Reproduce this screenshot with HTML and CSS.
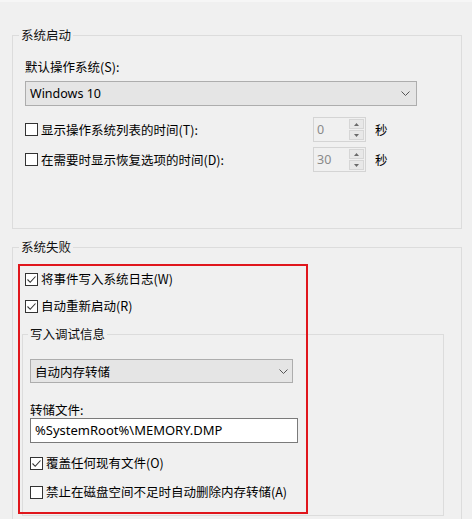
FILE: index.html
```html
<!DOCTYPE html>
<html lang="zh-CN">
<head>
<meta charset="utf-8">
<title>启动和故障恢复</title>
<link rel="stylesheet" href="styles.css">
</head>
<body>
<div class="page">
  <fieldset class="group g1">
    <legend>系统启动</legend>
    <div class="gbody">
      <div class="lbl">默认操作系统(S):</div>
      <div class="select wide">
        <span class="latin">Windows 10</span>
        <svg class="chev" width="9" height="5" viewBox="0 0 9 5"><polyline points="0.5,0.5 4.5,4.5 8.5,0.5" fill="none" stroke="#555" stroke-width="1"/></svg>
      </div>
      <div class="trow r1">
        <label class="cb"><span class="box"></span><span>显示操作系统列表的时间(T):</span></label>
        <div class="spin"><span class="num">0</span><span class="btns"><span class="sb"><svg width="5" height="3" viewBox="0 0 5 3"><polygon points="0,3 2.5,0 5,3" fill="#6a6a6a"/></svg></span><span class="sb"><svg width="5" height="3" viewBox="0 0 5 3"><polygon points="0,0 2.5,3 5,0" fill="#6a6a6a"/></svg></span></span></div>
        <span class="unit">秒</span>
      </div>
      <div class="trow r2">
        <label class="cb"><span class="box"></span><span>在需要时显示恢复选项的时间(D):</span></label>
        <div class="spin"><span class="num">30</span><span class="btns"><span class="sb"><svg width="5" height="3" viewBox="0 0 5 3"><polygon points="0,3 2.5,0 5,3" fill="#6a6a6a"/></svg></span><span class="sb"><svg width="5" height="3" viewBox="0 0 5 3"><polygon points="0,0 2.5,3 5,0" fill="#6a6a6a"/></svg></span></span></div>
        <span class="unit">秒</span>
      </div>
    </div>
  </fieldset>

  <fieldset class="group g2">
    <legend>系统失败</legend>
    <div class="gbody">
      <label class="cb c1"><span class="box"><svg width="11" height="11" viewBox="0 0 11 11"><polyline points="1.5,5.5 4.2,8.3 9.5,2.5" fill="none" stroke="#333" stroke-width="1.1"/></svg></span><span>将事件写入系统日志(W)</span></label>
      <label class="cb c2"><span class="box"><svg width="11" height="11" viewBox="0 0 11 11"><polyline points="1.5,5.5 4.2,8.3 9.5,2.5" fill="none" stroke="#333" stroke-width="1.1"/></svg></span><span>自动重新启动(R)</span></label>
      <fieldset class="group inner">
        <legend>写入调试信息</legend>
        <div class="ibody">
          <div class="select narrow">
            <span>自动内存转储</span>
            <svg class="chev" width="9" height="5" viewBox="0 0 9 5"><polyline points="0.5,0.5 4.5,4.5 8.5,0.5" fill="none" stroke="#555" stroke-width="1"/></svg>
          </div>
          <div class="lbl file">转储文件:</div>
          <div class="textbox latin">%SystemRoot%\MEMORY.DMP</div>
          <label class="cb c3"><span class="box"><svg width="11" height="11" viewBox="0 0 11 11"><polyline points="1.5,5.5 4.2,8.3 9.5,2.5" fill="none" stroke="#333" stroke-width="1.1"/></svg></span><span>覆盖任何现有文件(O)</span></label>
          <label class="cb c4"><span class="box"></span><span>禁止在磁盘空间不足时自动删除内存转储(A)</span></label>
        </div>
      </fieldset>
    </div>
    <div class="highlight"></div>
  </fieldset>
</div>
</body>
</html>
```

FILE: styles.css
```css
html, body {
  margin: 0;
  background: #f0f0f0;
}
body {
  font-family: "Noto Sans CJK SC", "Noto Sans", sans-serif;
  font-size: 12.5px;
  color: #000;
  overflow: hidden;
}
.page {
  border-top: 2px solid #f6f6f6;
  padding: 25px 0 0 12px;
}
.latin {
  font-family: "Noto Sans", "Noto Sans CJK SC", sans-serif;
}
.group {
  margin: 0;
  padding: 0;
  min-width: 0;
  border: 1px solid #dcdcdc;
  box-sizing: border-box;
}
.group > legend {
  padding: 0 2px;
  margin-left: 6px;
  line-height: 16px;
  font-size: 12.5px;
  color: #111;
}
.g1 {
  width: 450px;
  height: 202px;
}
.g1 .gbody {
  padding: 16px 0 0 12px;
}
.lbl {
  line-height: 16px;
}
.select {
  display: flex;
  align-items: center;
  justify-content: space-between;
  box-sizing: border-box;
  border: 1px solid #adadad;
  background: #e5e5e5;
  padding: 0 6px 0 4px;
}
.select.wide {
  margin-top: 6px;
  width: 392px;
  height: 25px;
}
.select.wide .latin {
  font-size: 12.5px;
}
.chev {
  display: block;
}
.trow {
  display: grid;
  grid-template-columns: 279px 53px auto;
  column-gap: 9px;
  align-items: center;
  height: 25px;
}
.trow.r1 {
  margin-top: 11px;
}
.trow.r2 {
  margin-top: 5px;
}
.cb {
  display: flex;
  align-items: center;
  gap: 3px;
  line-height: 16px;
  height: 16px;
  white-space: nowrap;
}
.box {
  width: 13px;
  height: 13px;
  box-sizing: border-box;
  border: 1px solid #333;
  background: #fff;
  display: flex;
  align-items: center;
  justify-content: center;
  flex: none;
}
.box svg {
  display: block;
}
.spin {
  display: flex;
  justify-content: space-between;
  height: 25px;
  box-sizing: border-box;
  border: 1px solid #d4d4d4;
  background: #f0f0f0;
}
.num {
  font-family: "Noto Sans", sans-serif;
  color: #8a8a8a;
  padding-left: 3px;
  line-height: 23px;
  font-size: 12.5px;
}
.btns {
  display: flex;
  flex-direction: column;
  gap: 1px;
  width: 15px;
  padding: 1px 1px 1px 0;
}
.sb {
  flex: 1;
  display: flex;
  align-items: center;
  justify-content: center;
  background: #e8e8e8;
  border: 1px solid #d6d6d6;
}
.sb svg {
  display: block;
}
.unit {
  color: #000;
}
.g2 {
  position: relative;
  width: 450px;
  height: 300px;
  margin-top: 10px;
}
.g2 .gbody {
  padding: 16px 0 0 9px;
}
.c1, .c2 {
  margin-left: 3px;
}
.c2 {
  margin-top: 11px;
}
.inner {
  width: 422px;
  height: 190px;
  margin-top: 12px;
}
.inner > legend {
  margin-left: 5px;
}
.ibody {
  padding: 17px 0 0 7px;
}
.select.narrow {
  width: 263px;
  height: 24px;
  padding-right: 4px;
}
.lbl.file {
  margin-top: 19px;
}
.textbox {
  width: 268px;
  height: 25px;
  box-sizing: border-box;
  border: 1px solid #7a7a7a;
  background: #fff;
  padding-left: 4px;
  font-size: 13px;
  line-height: 23px;
  white-space: nowrap;
}
.c3 {
  margin-top: 12px;
}
.c4 {
  margin-top: 13px;
}
.highlight {
  position: absolute;
  left: 5px;
  top: 9px;
  width: 290px;
  height: 250px;
  box-sizing: border-box;
  border: 2px solid #e0161c;
  pointer-events: none;
}
```
